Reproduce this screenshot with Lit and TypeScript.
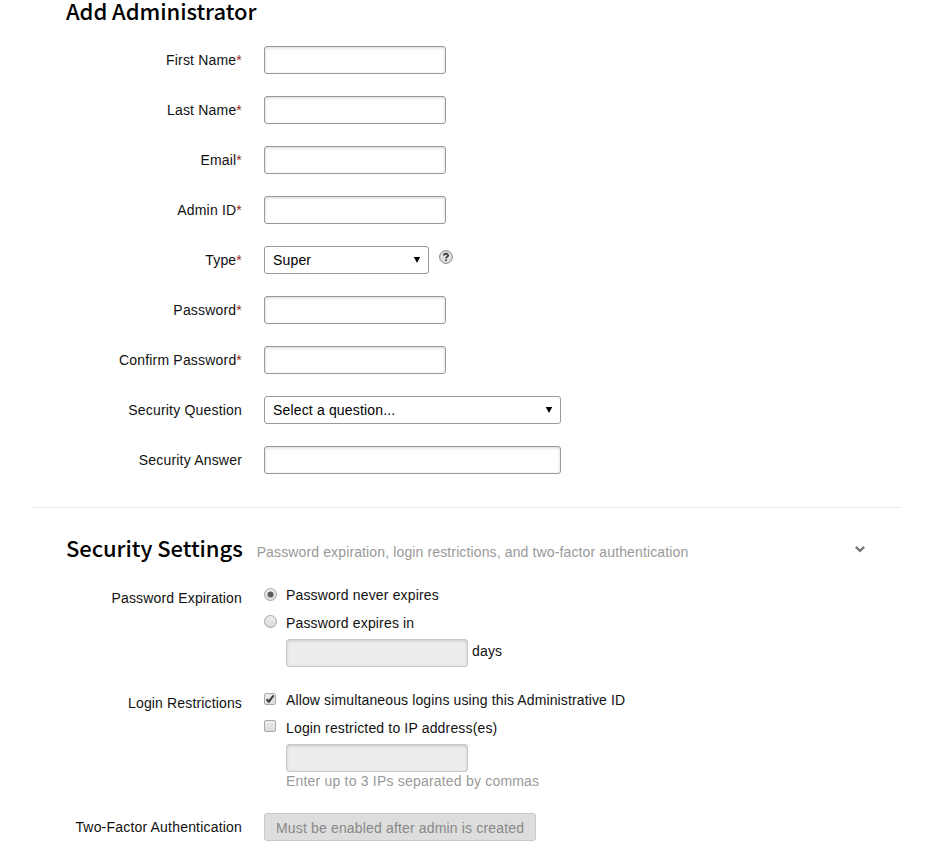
import { LitElement, html, css, svg, nothing } from "lit";
import { customElement } from "lit/decorators.js";
import { classMap } from "lit/directives/class-map.js";

interface Field {
  label: string;
  required?: boolean;
  wide?: boolean;
  select?: string;
  help?: boolean;
}

const FIELDS: Field[] = [
  { label: "First Name", required: true },
  { label: "Last Name", required: true },
  { label: "Email", required: true },
  { label: "Admin ID", required: true },
  { label: "Type", required: true, select: "Super", help: true },
  { label: "Password", required: true },
  { label: "Confirm Password", required: true },
  { label: "Security Question", select: "Select a question...", wide: true },
  { label: "Security Answer", wide: true },
];

@customElement("app-root")
export class AppRoot extends LitElement {
  static styles = css`
    :host {
      display: block;
      height: 864px;
      overflow: hidden;
      background: #fff;
      color: #111;
      font: 14px/20px "Liberation Sans", Arial, sans-serif;
      letter-spacing: 0.16px;
    }
    h2 {
      margin: 0;
      font: 500 22px/20px "Noto Sans CJK JP", sans-serif;
      letter-spacing: -0.06px;
      color: #000;
      white-space: nowrap;
    }
    .title {
      height: 46px;
      padding-left: 66px;
    }
    .row {
      display: grid;
      grid-template-columns: 242px 1fr;
      column-gap: 22px;
      align-items: start;
    }
    .field {
      height: 50px;
    }
    .label {
      text-align: right;
      line-height: 28px;
      letter-spacing: 0.19px;
      white-space: nowrap;
    }
    .star {
      color: #922;
    }
    .control {
      display: flex;
      align-items: flex-start;
    }
    .input,
    .select {
      box-sizing: border-box;
      width: 182px;
      height: 28px;
      border: 1px solid #999;
      border-radius: 3px;
      background: #fff;
    }
    .input {
      box-shadow: inset 0 1px 3px rgba(0, 0, 0, 0.17);
    }
    .input.off {
      background: #ededed;
      border-color: #c8c8c8;
    }
    .select {
      width: 165px;
      display: flex;
      align-items: center;
      justify-content: space-between;
      padding: 0 8px;
      color: #000;
    }
    .wide {
      width: 297px;
    }
    .help {
      margin: 4px 0 0 10px;
    }
    svg {
      display: block;
      flex: none;
    }
    .rule {
      height: 1px;
      margin: 11px 31px 0 33px;
      background: #eaeaea;
    }
    .section {
      display: flex;
      box-sizing: border-box;
      height: 77px;
      padding: 26px 67px 0 66px;
    }
    .section h2 {
      margin-top: 3px;
    }
    .sub {
      flex: 1;
      margin: 8px 0 0 14px;
      color: #999;
      letter-spacing: 0.13px;
    }
    .chev {
      margin-top: 12px;
    }
    .options .label {
      line-height: 26px;
      letter-spacing: 0.15px;
    }
    .logins {
      margin-top: 23px;
    }
    .opt {
      display: flex;
      height: 28px;
    }
    .opt svg {
      margin: 3px 9px 0 0;
    }
    .opt.last {
      height: 26px;
    }
    .opt.last svg {
      margin-top: 2px;
    }
    .tight {
      letter-spacing: 0.13px;
    }
    .indent {
      display: flex;
      margin-left: 22px;
    }
    .days {
      margin: 2px 0 0 4px;
    }
    .hint {
      margin: -1px 0 22px 22px;
      color: #999;
      letter-spacing: 0.2px;
    }
    .button {
      box-sizing: border-box;
      width: 272px;
      height: 28px;
      padding: 0 11px;
      border: 1px solid #c8c8c8;
      border-radius: 3px;
      background: #ddd;
      color: #888;
      line-height: 28px;
      white-space: nowrap;
    }
  `;

  private radio(on: boolean) {
    return html`<svg width="13" height="13" viewBox="0 0 13 13">
      <defs>
        <linearGradient id="r" x1="0" y1="0" x2="0" y2="1">
          <stop offset="0" stop-color="#eee" />
          <stop offset="1" stop-color="#d9d9d9" />
        </linearGradient>
      </defs>
      <circle cx="6.5" cy="6.5" r="6" fill="url(#r)" stroke="#a6a6a6" />
      ${on ? svg`<circle cx="6.5" cy="6.5" r="3" fill="#5c5c5c"/>` : nothing}
    </svg>`;
  }

  private check(on: boolean) {
    return html`<svg width="13" height="13" viewBox="0 0 13 13">
      <defs>
        <linearGradient id="c" x1="0" y1="0" x2="0" y2="1">
          <stop offset="0" stop-color="#eee" />
          <stop offset="1" stop-color="#dadada" />
        </linearGradient>
      </defs>
      <rect x="0.5" y="0.5" width="11" height="11" rx="1.5" fill="url(#c)" stroke="#a9a9a9" />
      ${on ? svg`<path d="M2.6 6.2L4.9 8.6L9.6 2.4" fill="none" stroke="#3c3c3c" stroke-width="2.1"/>` : nothing}
    </svg>`;
  }

  private field(f: Field) {
    const cls = classMap({ input: !f.select, select: !!f.select, wide: !!f.wide });
    return html`<div class="row field">
      <div class="label">${f.label}${f.required ? html`<span class="star">*</span>` : nothing}</div>
      <div class="control">
        <div class=${cls}>
          ${f.select
            ? html`<span>${f.select}</span>
                <svg width="6" height="6" viewBox="0 0 6 6"><path d="M-0.2 0H6.2L3 6Z" /></svg>`
            : nothing}
        </div>
        ${f.help
          ? html`<svg class="help" width="14" height="14" viewBox="0 0 14 14">
              <circle cx="7" cy="7" r="6.4" fill="#ddd" stroke="#888" />
              <path
                d="M4.9 5.5C5 3.2 9.1 3.2 9.1 5.4C9.1 6.9 7.1 6.7 7.1 8.5M7.1 9.4V11"
                fill="none"
                stroke="#444"
                stroke-width="1.8"
              />
            </svg>`
          : nothing}
      </div>
    </div>`;
  }

  render() {
    return html`
      <div class="title"><h2>Add Administrator</h2></div>
      ${FIELDS.map((f) => this.field(f))}
      <div class="rule"></div>
      <div class="section">
        <h2>Security Settings</h2>
        <div class="sub">Password expiration, login restrictions, and two-factor authentication</div>
        <svg class="chev" width="12" height="8" viewBox="0 0 12 8">
          <path d="M1.8 0.9L6 4.9L10.2 0.9" fill="none" stroke="#777" stroke-width="2.3" />
        </svg>
      </div>
      <div class="row options">
        <div class="label">Password Expiration</div>
        <div>
          <div class="opt">${this.radio(true)}<span>Password never expires</span></div>
          <div class="opt last">${this.radio(false)}<span>Password expires in</span></div>
          <div class="indent">
            <div class="input off"></div>
            <span class="days">days</span>
          </div>
        </div>
      </div>
      <div class="row options logins">
        <div class="label">Login Restrictions</div>
        <div>
          <div class="opt">
            ${this.check(true)}<span class="tight">Allow simultaneous logins using this Administrative ID</span>
          </div>
          <div class="opt last">${this.check(false)}<span>Login restricted to IP address(es)</span></div>
          <div class="indent"><div class="input off"></div></div>
          <div class="hint">Enter up to 3 IPs separated by commas</div>
        </div>
      </div>
      <div class="row">
        <div class="label">Two-Factor Authentication</div>
        <div class="control"><div class="button">Must be enabled after admin is created</div></div>
      </div>
    `;
  }
}
